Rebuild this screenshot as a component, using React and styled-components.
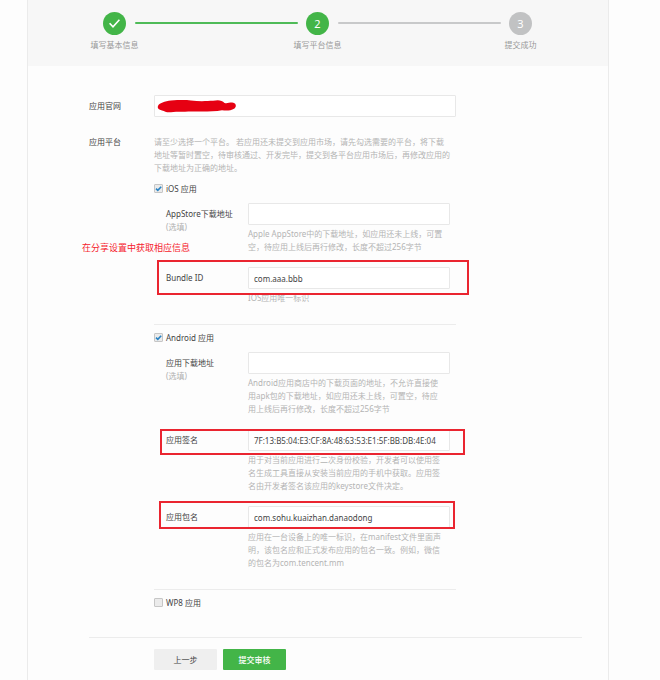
import React, { useState } from "react";
import styled, { createGlobalStyle } from "styled-components";

const GlobalStyle = createGlobalStyle`
  * {
    box-sizing: border-box;
  }
  body {
    margin: 0;
    background-color: #fdfdfd;
    color: #444;
    font-family: "Noto Sans", "Noto Sans CJK SC", sans-serif;
    font-size: 8px;
    line-height: 13px;
  }
  button, input {
    font: inherit;
    color: inherit;
  }
`;

const Page = styled.main`
  min-height: 100vh;
  margin: 0 51px 0 27px;
  border: 1px solid #ebebeb;
  border-width: 0 1px;
`;

const Steps = styled.ol`
  display: flex;
  align-items: flex-start;
  height: 66px;
  margin: 0;
  padding: 12px 76px 0 75px;
  list-style: none;
  background-color: #f7f7f7;
`;

const Step = styled.li`
  display: flex;
  flex: 1;
  &:last-child {
    flex: none;
  }
`;

const StepBody = styled.div`
  display: flex;
  flex-direction: column;
  align-items: center;
  gap: 3px;
  width: 23px;
  color: #999;
  white-space: nowrap;
`;

const Circle = styled.span`
  display: flex;
  align-items: center;
  justify-content: center;
  flex: none;
  width: 23px;
  height: 23px;
  border-radius: 50%;
  background-color: ${(props) => (props.$active ? "#43b548" : "#c1c2c3")};
  color: #fff;
  font-size: 11px;
`;

const Connector = styled.span`
  flex: 1;
  height: 2px;
  margin: 10px 8px 0 9px;
  border-radius: 1px;
  background-color: ${(props) => (props.$active ? "#4fbb58" : "#c8c9ca")};
`;

const Form = styled.form`
  padding: 29px 26px 11px 61px;
`;

const Row = styled.div`
  display: grid;
  grid-template-columns: 65px minmax(0, 302px);
  margin-bottom: 18px;
`;

const RowLabel = styled.label`
  padding-top: ${(props) => (props.$boxed ? "4px" : "0")};
`;

const InputWrap = styled.div`
  position: relative;
`;

const Input = styled.input`
  display: block;
  width: 100%;
  height: 22px;
  padding: 0 5px;
  border: 1px solid #e8e8e8;
  border-radius: 1px;
  background-color: #fff;
  outline: none;
`;

const Scribble = styled.svg`
  position: absolute;
  top: 4px;
  left: 3px;
`;

const Help = styled.p`
  margin: ${(props) => (props.$under ? "2px 0 0" : "0")};
  color: #b4b4b4;
  white-space: pre-line;
`;

const PlatformList = styled.div`
  margin-top: 8px;
`;

const Platform = styled.section`
  padding-bottom: 20px;
  & + & {
    padding-top: 6px;
    border-top: 1px solid #ececec;
  }
  &:last-child {
    padding-bottom: 0;
  }
`;

const CheckLabel = styled.label`
  display: inline-flex;
  align-items: center;
  gap: 3px;
  vertical-align: top;
`;

const CheckBox = styled.span`
  display: grid;
  width: 9px;
  height: 9px;
  & > * {
    grid-area: 1 / 1;
  }
  svg {
    pointer-events: none;
  }
`;

const CheckInput = styled.input`
  appearance: none;
  width: 9px;
  height: 9px;
  margin: 0;
  border: 1px solid #c6c6c6;
  border-radius: 1px;
  background-color: #ebebeb;
`;

const Fields = styled.div`
  display: flex;
  flex-direction: column;
  gap: 14px;
  margin-top: 8px;
`;

const FieldBox = styled.div`
  position: relative;
  display: grid;
  grid-template-columns: 82px minmax(0, 1fr);
  padding: 0 6px 0 12px;
`;

const FieldLabel = styled.label`
  padding-top: 4px;
  white-space: nowrap;
`;

const Optional = styled.span`
  display: block;
  color: #b0b0b0;
`;

const Highlight = styled.div`
  position: absolute;
  top: ${(props) => props.$top}px;
  left: ${(props) => props.$left}px;
  right: ${(props) => props.$right}px;
  height: ${(props) => props.$height}px;
  border: 2px solid #ea2530;
  pointer-events: none;
`;

const Note = styled.span`
  position: absolute;
  top: -26px;
  left: -72px;
  color: #f5222d;
  font-size: 9px;
  white-space: nowrap;
`;

const Actions = styled.div`
  display: flex;
  gap: 6px;
  margin-top: 28px;
  padding: 11px 0 0 65px;
  border-top: 1px solid #ececec;
`;

const Button = styled.button`
  width: 63px;
  height: 21px;
  padding: 0;
  border: 0;
  border-radius: 1px;
  background-color: ${(props) => (props.$primary ? "#43b548" : "#efefef")};
  color: ${(props) => (props.$primary ? "#fff" : "#444")};
  font-weight: ${(props) => (props.$primary ? 500 : 400)};
  cursor: pointer;
`;

const steps = [
  { label: "填写基本信息", active: true, done: true },
  { label: "填写平台信息", active: true },
  { label: "提交成功" },
];

const intro =
  "请至少选择一个平台。 若应用还未提交到应用市场，请先勾选需要的平台，将下载\n地址等暂时置空，待审核通过、开发完毕，提交到各平台应用市场后，再修改应用的\n下载地址为正确的地址。";

const platforms = [
  {
    id: "ios",
    name: "iOS 应用",
    checked: true,
    fields: [
      {
        id: "ios-url",
        label: "AppStore下载地址",
        optional: true,
        help: "Apple AppStore中的下载地址，如应用还未上线，可置\n空，待应用上线后再行修改，长度不超过256字节",
      },
      {
        id: "ios-bundle",
        label: "Bundle ID",
        value: "com.aaa.bbb",
        help: "IOS应用唯一标识",
        note: "在分享设置中获取相应信息",
        highlight: { $top: -7, $left: 3, $right: -13, $height: 35 },
      },
    ],
  },
  {
    id: "android",
    name: "Android 应用",
    checked: true,
    fields: [
      {
        id: "android-url",
        label: "应用下载地址",
        optional: true,
        help: "Android应用商店中的下载页面的地址，不允许直接使\n用apk包的下载地址，如应用还未上线，可置空，待应\n用上线后再行修改，长度不超过256字节",
      },
      {
        id: "android-sign",
        label: "应用签名",
        value: "7F:13:B5:04:E3:CF:8A:48:63:53:E1:5F:BB:DB:4E:04",
        help: "用于对当前应用进行二次身份校验，开发者可以使用签\n名生成工具直接从安装当前应用的手机中获取。应用签\n名由开发者签名该应用的keystore文件决定。",
        highlight: { $top: 0, $left: 6, $right: -9, $height: 26 },
      },
      {
        id: "android-package",
        label: "应用包名",
        value: "com.sohu.kuaizhan.danaodong",
        help: "应用在一台设备上的唯一标识，在manifest文件里面声\n明，该包名应和正式发布应用的包名一致。例如，微信\n的包名为com.tencent.mm",
        highlight: { $top: -5, $left: 5, $right: 1, $height: 28 },
      },
    ],
  },
  { id: "wp8", name: "WP8 应用", checked: false, fields: [] },
];

const Field = ({ field }) => {
  return (
    <FieldBox>
      <FieldLabel htmlFor={field.id}>
        {field.label}
        {field.optional && <Optional>(选填)</Optional>}
      </FieldLabel>
      <div>
        <Input id={field.id} type="text" defaultValue={field.value} />
        <Help $under>{field.help}</Help>
      </div>
      {field.note && <Note>{field.note}</Note>}
      {field.highlight && <Highlight {...field.highlight} />}
    </FieldBox>
  );
};

const PlatformSection = ({ platform }) => {
  const [checked, setChecked] = useState(platform.checked);
  return (
    <Platform>
      <CheckLabel>
        <CheckBox>
          <CheckInput
            type="checkbox"
            checked={checked}
            onChange={(e) => setChecked(e.target.checked)}
          />
          {checked && (
            <svg width="9" height="9" viewBox="0 0 9 9" fill="none">
              <path d="M2 4.6 3.8 6.3 7.2 2.7" stroke="#2a84c4" strokeWidth="1.6" />
            </svg>
          )}
        </CheckBox>
        {platform.name}
      </CheckLabel>
      {platform.fields.length > 0 && (
        <Fields>
          {platform.fields.map((field) => (
            <Field key={field.id} field={field} />
          ))}
        </Fields>
      )}
    </Platform>
  );
};

const App = () => {
  return (
    <>
      <GlobalStyle />
      <Page>
        <Steps>
          {steps.map((step, index) => (
            <Step key={step.label}>
              <StepBody>
                <Circle $active={step.active}>
                  {step.done ? (
                    <svg width="13" height="11" viewBox="0 0 13 11" fill="none">
                      <path d="M1.6 5.2 5 8.8 11.4 1.8" stroke="#fff" strokeWidth="1.6" />
                    </svg>
                  ) : (
                    index + 1
                  )}
                </Circle>
                <span>{step.label}</span>
              </StepBody>
              {index < steps.length - 1 && <Connector $active={step.done} />}
            </Step>
          ))}
        </Steps>
        <Form onSubmit={(e) => e.preventDefault()}>
          <Row>
            <RowLabel htmlFor="site" $boxed>
              应用官网
            </RowLabel>
            <InputWrap>
              <Input id="site" type="text" />
              <Scribble width="80" height="14" viewBox="0 0 80 14">
                <path
                  d="M.8 7.4C2 4 8 2.400 14 1.600C22 1 28 1 34 1.400C42 2.600 50 2 56 1.800C61 .6 65 1 67.500 4C70 4.800 72 3.600 75 3.600C79 3.600 80 7.600 77.500 9.400C73 12 69 11.600 65 11.200C57 12.600 46 12.600 38 12.400C29 12.600 20 12.400 14 13.200C9 13.600 8 12 5 11.400C2 10.600 .3 9.400 .8 7.400Z"
                  fill="#e60012"
                />
              </Scribble>
            </InputWrap>
          </Row>
          <Row>
            <RowLabel as="span">应用平台</RowLabel>
            <div>
              <Help>{intro}</Help>
              <PlatformList>
                {platforms.map((platform) => (
                  <PlatformSection key={platform.id} platform={platform} />
                ))}
              </PlatformList>
            </div>
          </Row>
          <Actions>
            <Button type="button">上一步</Button>
            <Button type="submit" $primary>
              提交审核
            </Button>
          </Actions>
        </Form>
      </Page>
    </>
  );
};

export default App;
